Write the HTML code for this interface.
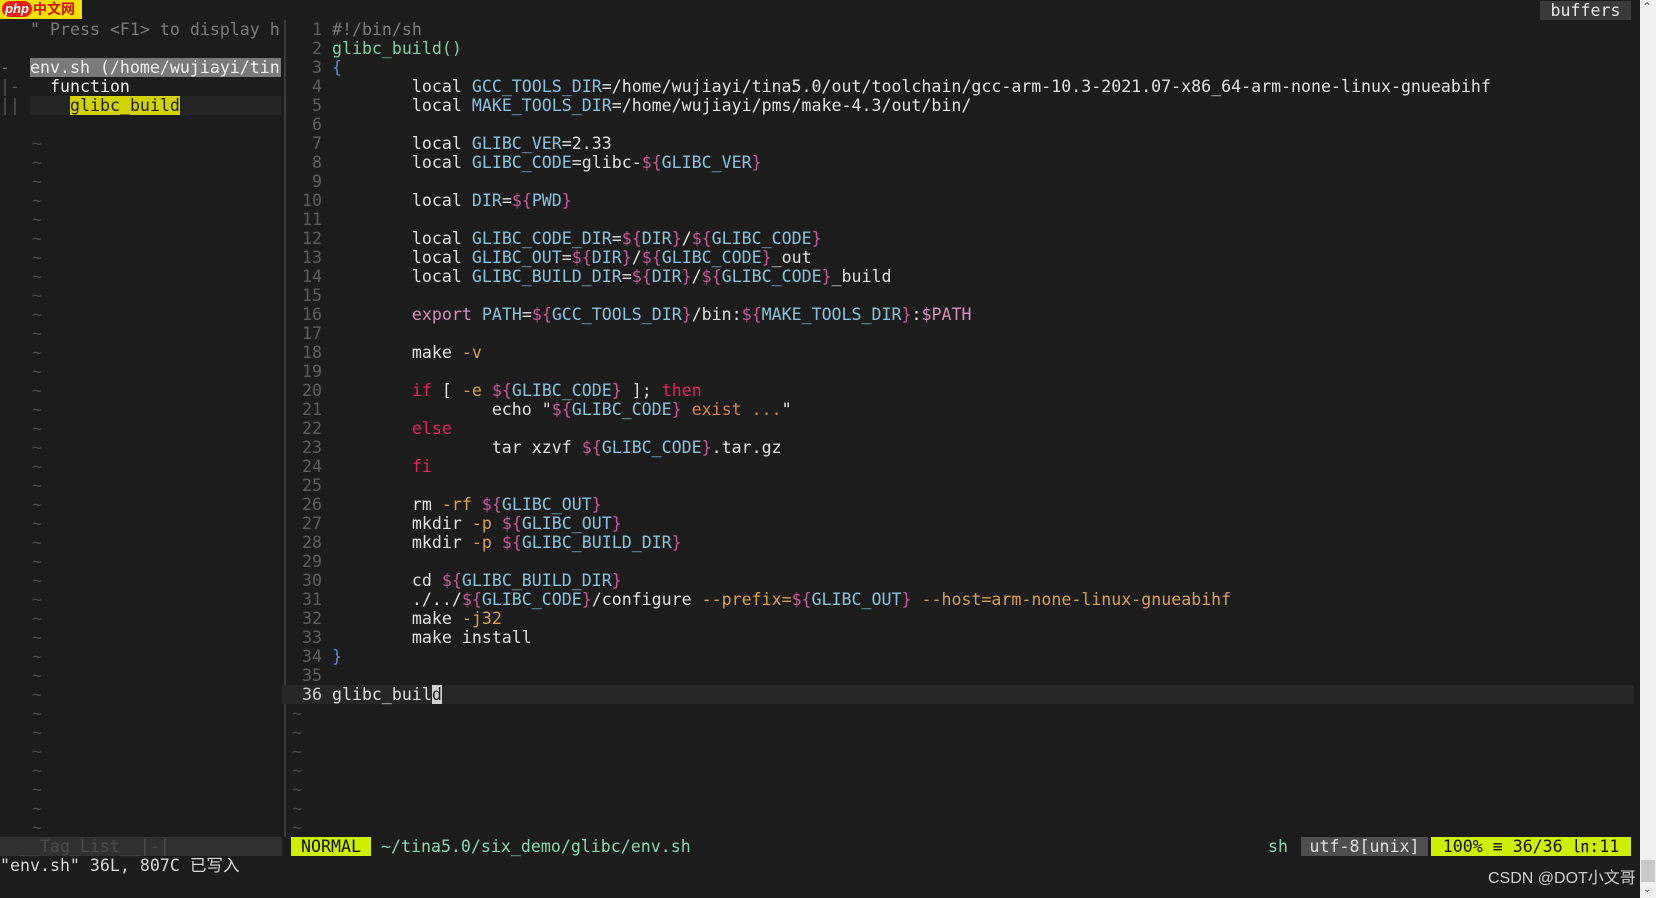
<!DOCTYPE html>
<html><head><meta charset="utf-8"><style>
html,body{margin:0;padding:0;background:#1c1c1c;width:1656px;height:898px;overflow:hidden}
#t{position:absolute;left:0;top:1px;width:1640px;height:897px;font-family:"DejaVu Sans Mono","Liberation Mono","Noto Sans CJK SC",monospace;font-size:16.6px;color:#d8d8d8}
.r{position:absolute;height:19px;line-height:19px;white-space:pre}
.n{color:#5e5e5e}
.c{color:#7a7a7a}
.g{color:#7fcfa5}
.bl{color:#5f87d7}
.v{color:#87c3dd}
.b{color:#c8589b}
.k{color:#e0245e}
.o{color:#d7a04f}
.e{color:#d88fc0}
.s{color:#d4804f}
.ti{color:#4a4a4a}
.sep{position:absolute;left:284px;top:19px;width:2px;height:817px;background:#3c3c3c}
</style></head><body><div id="t">
<div style="position:absolute;left:0;top:-1px;width:82px;height:19px;background:#f5e000"></div>
<div style="position:absolute;left:2px;top:0px;width:30px;height:16px;background:#e8201c;border-radius:8px;color:#fff;font:italic bold 13px 'Liberation Sans',sans-serif;line-height:16px;text-align:center">php</div>
<div style="position:absolute;left:33px;top:-1px;height:19px;color:#d01010;font:bold 14px 'Noto Sans CJK SC',sans-serif;line-height:19px">中文网</div>
<div class="r" style="left:1540px;top:0;width:91px;background:#3a3a3a;color:#e8e8e8;text-align:center">buffers</div>
<div class="sep"></div>
<div class="r c" style="left:30px;top:19px">" Press &lt;F1&gt; to display h</div>
<div class="r" style="left:0;top:57px;color:#6a6a6a">-</div>
<div class="r" style="left:30px;top:57px;width:251px;background:#7a7a7a;color:#f2f2f2">env.sh (/home/wujiayi/tin</div>
<div class="r" style="left:0;top:76px;color:#555">|-</div>
<div class="r" style="left:50px;top:76px;color:#eee">function</div>
<div class="r" style="left:30px;top:95px;width:251px;background:#242424"></div>
<div class="r" style="left:0;top:95px;color:#555">||</div>
<div class="r" style="left:70px;top:95px;background:#d2d200;color:#222">glibc_build</div>
<div class="r" style="left:0;top:836px;width:282px;background:#303030;color:#4c4c4c">  __Tag_List__|-|</div>
<div class="r" style="left:0;top:855px">"env.sh" 36L, 807C 已写入</div>
<div class="r" style="left:291px;top:836px;width:80px;background:#cdf000;color:#111;text-align:center">NORMAL</div>
<div class="r" style="left:381px;top:836px;color:#87d7af">~/tina5.0/six_demo/glibc/env.sh</div>
<div class="r" style="left:1268px;top:836px;color:#87d7af">sh</div>
<div class="r" style="left:1301px;top:836px;width:127px;background:#4e4e4e;color:#e0e0e0;text-align:center">utf-8[unix]</div>
<div class="r" style="left:1431px;top:836px;width:200px;background:#cdf000;color:#111;text-align:center">100% ≡ 36/36 ㏑:11</div>
<div class="r" style="left:282px;top:684px;width:1352px;background:#262626"></div>
<div class="r n" style="left:292px;top:19px">  1 <span class="c">#!/bin/sh</span></div>
<div class="r n" style="left:292px;top:38px">  2 <span class="g">glibc_build()</span></div>
<div class="r n" style="left:292px;top:57px">  3 <span class="bl">{</span></div>
<div class="r n" style="left:292px;top:76px">  4 <span style="color:#e0e0e0">        local <span class="v">GCC_TOOLS_DIR</span>=/home/wujiayi/tina5.0/out/toolchain/gcc-arm-10.3-2021.07-x86_64-arm-none-linux-gnueabihf</span></div>
<div class="r n" style="left:292px;top:95px">  5 <span style="color:#e0e0e0">        local <span class="v">MAKE_TOOLS_DIR</span>=/home/wujiayi/pms/make-4.3/out/bin/</span></div>
<div class="r n" style="left:292px;top:114px">  6</div>
<div class="r n" style="left:292px;top:133px">  7 <span style="color:#e0e0e0">        local <span class="v">GLIBC_VER</span>=2.33</span></div>
<div class="r n" style="left:292px;top:152px">  8 <span style="color:#e0e0e0">        local <span class="v">GLIBC_CODE</span>=glibc-<span class="b">${</span><span class="v">GLIBC_VER</span><span class="b">}</span></span></div>
<div class="r n" style="left:292px;top:171px">  9</div>
<div class="r n" style="left:292px;top:190px"> 10 <span style="color:#e0e0e0">        local <span class="v">DIR</span>=<span class="b">${</span><span class="v">PWD</span><span class="b">}</span></span></div>
<div class="r n" style="left:292px;top:209px"> 11</div>
<div class="r n" style="left:292px;top:228px"> 12 <span style="color:#e0e0e0">        local <span class="v">GLIBC_CODE_DIR</span>=<span class="b">${</span><span class="v">DIR</span><span class="b">}</span>/<span class="b">${</span><span class="v">GLIBC_CODE</span><span class="b">}</span></span></div>
<div class="r n" style="left:292px;top:247px"> 13 <span style="color:#e0e0e0">        local <span class="v">GLIBC_OUT</span>=<span class="b">${</span><span class="v">DIR</span><span class="b">}</span>/<span class="b">${</span><span class="v">GLIBC_CODE</span><span class="b">}</span>_out</span></div>
<div class="r n" style="left:292px;top:266px"> 14 <span style="color:#e0e0e0">        local <span class="v">GLIBC_BUILD_DIR</span>=<span class="b">${</span><span class="v">DIR</span><span class="b">}</span>/<span class="b">${</span><span class="v">GLIBC_CODE</span><span class="b">}</span>_build</span></div>
<div class="r n" style="left:292px;top:285px"> 15</div>
<div class="r n" style="left:292px;top:304px"> 16 <span style="color:#e0e0e0">        <span class="e">export</span> <span class="v">PATH</span>=<span class="b">${</span><span class="v">GCC_TOOLS_DIR</span><span class="b">}</span>/bin:<span class="b">${</span><span class="v">MAKE_TOOLS_DIR</span><span class="b">}</span>:<span class="e">$PATH</span></span></div>
<div class="r n" style="left:292px;top:323px"> 17</div>
<div class="r n" style="left:292px;top:342px"> 18 <span style="color:#e0e0e0">        make <span class="o">-v</span></span></div>
<div class="r n" style="left:292px;top:361px"> 19</div>
<div class="r n" style="left:292px;top:380px"> 20 <span style="color:#e0e0e0">        <span class="k">if</span> [ <span class="o">-e</span> <span class="b">${</span><span class="v">GLIBC_CODE</span><span class="b">}</span> ]; <span class="k">then</span></span></div>
<div class="r n" style="left:292px;top:399px"> 21 <span style="color:#e0e0e0">                echo "<span class="b">${</span><span class="v">GLIBC_CODE</span><span class="b">}</span><span class="s"> exist ...</span>"</span></div>
<div class="r n" style="left:292px;top:418px"> 22 <span style="color:#e0e0e0">        <span class="k">else</span></span></div>
<div class="r n" style="left:292px;top:437px"> 23 <span style="color:#e0e0e0">                tar xzvf <span class="b">${</span><span class="v">GLIBC_CODE</span><span class="b">}</span>.tar.gz</span></div>
<div class="r n" style="left:292px;top:456px"> 24 <span style="color:#e0e0e0">        <span class="k">fi</span></span></div>
<div class="r n" style="left:292px;top:475px"> 25</div>
<div class="r n" style="left:292px;top:494px"> 26 <span style="color:#e0e0e0">        rm <span class="o">-rf</span> <span class="b">${</span><span class="v">GLIBC_OUT</span><span class="b">}</span></span></div>
<div class="r n" style="left:292px;top:513px"> 27 <span style="color:#e0e0e0">        mkdir <span class="o">-p</span> <span class="b">${</span><span class="v">GLIBC_OUT</span><span class="b">}</span></span></div>
<div class="r n" style="left:292px;top:532px"> 28 <span style="color:#e0e0e0">        mkdir <span class="o">-p</span> <span class="b">${</span><span class="v">GLIBC_BUILD_DIR</span><span class="b">}</span></span></div>
<div class="r n" style="left:292px;top:551px"> 29</div>
<div class="r n" style="left:292px;top:570px"> 30 <span style="color:#e0e0e0">        cd <span class="b">${</span><span class="v">GLIBC_BUILD_DIR</span><span class="b">}</span></span></div>
<div class="r n" style="left:292px;top:589px"> 31 <span style="color:#e0e0e0">        ./../<span class="b">${</span><span class="v">GLIBC_CODE</span><span class="b">}</span>/configure <span class="o">--prefix=</span><span class="b">${</span><span class="v">GLIBC_OUT</span><span class="b">}</span> <span class="o">--host=arm-none-linux-gnueabihf</span></span></div>
<div class="r n" style="left:292px;top:608px"> 32 <span style="color:#e0e0e0">        make <span class="o">-j32</span></span></div>
<div class="r n" style="left:292px;top:627px"> 33 <span style="color:#e0e0e0">        make install</span></div>
<div class="r n" style="left:292px;top:646px"> 34 <span class="bl">}</span></div>
<div class="r n" style="left:292px;top:665px"> 35</div>
<div class="r" style="left:292px;top:684px;color:#cfcfcf"> 36 <span style="color:#e0e0e0">glibc_buil<span style="background:#d0d0d0;color:#1c1c1c">d</span></span></div>
<div class="r ti" style="left:292px;top:703px">~<br>~<br>~<br>~<br>~<br>~<br>~</div>
<div class="r ti" style="left:32px;top:133px">~<br>~<br>~<br>~<br>~<br>~<br>~<br>~<br>~<br>~<br>~<br>~<br>~<br>~<br>~<br>~<br>~<br>~<br>~<br>~<br>~<br>~<br>~<br>~<br>~<br>~<br>~<br>~<br>~<br>~<br>~<br>~<br>~<br>~<br>~<br>~<br>~</div>
<div class="r" style="left:1488px;top:868px;font-family:'Liberation Sans','Noto Sans CJK SC',sans-serif;font-size:16px;color:#cfcfcf">CSDN @DOT小文哥</div>
</div>
<div style="position:absolute;left:1640px;top:0;width:16px;height:898px;background:#f0f0f0"></div>
<div style="position:absolute;left:1642px;top:0;font:12px 'DejaVu Sans',sans-serif;color:#555">⌃</div>
<div style="position:absolute;left:1641px;top:860px;width:14px;height:22px;background:#c8c8c8"></div>
<div style="position:absolute;left:1643px;top:884px;font:10px 'DejaVu Sans',sans-serif;color:#555">⌄</div>
</body></html>
